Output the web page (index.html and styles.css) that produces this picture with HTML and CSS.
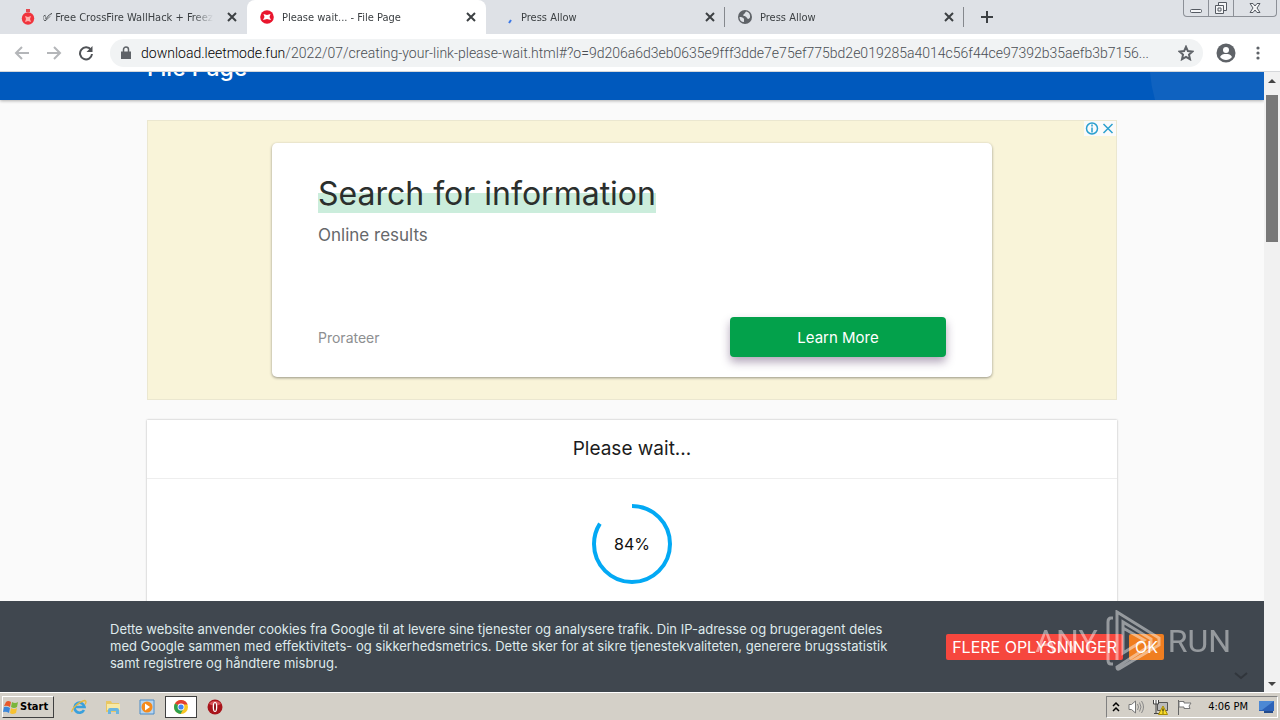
FILE: index.html
```html
<!DOCTYPE html>
<html lang="da">
<head>
    <meta charset="UTF-8">
    <meta name="viewport" content="width=device-width, initial-scale=1.0">
    <title>Please wait... - File Page</title>
    <link rel="stylesheet" href="styles.css">
</head>
<body>
    <!-- Tabs -->
    <div class="tabstrip">
        <div class="tab">
            <svg class="favicon" viewBox="0 0 16 16"><path d="M6 0h4v3H6z" fill="#e5484f"/><circle cx="8" cy="9.500" r="6.200" fill="#f0343d"/><path d="M5 7l3 1 3-1-1 3 1 3-3-1-3 1 1-3z" fill="#ffb0ac"/></svg>
            <a class="tab-title" href="#">✅︎ Free CrossFire WallHack + Freeze</a>
            <button class="tab-close" aria-label="Close tab"><svg viewBox="0 0 16 16"><path d="M4 4l8 8M12 4l-8 8"/></svg></button>
        </div>
        <div class="tab active">
            <svg class="favicon" viewBox="0 0 16 16"><circle cx="8" cy="8" r="6.800" fill="#e9152d"/><path d="M4.500 5l3.500 1 3.500-1-1 3 1.500 3-4-1-4 1 1.500-3z" fill="#fff"/></svg>
            <a class="tab-title" href="#">Please wait... - File Page</a>
            <button class="tab-close" aria-label="Close tab"><svg viewBox="0 0 16 16"><path d="M4 4l8 8M12 4l-8 8"/></svg></button>
        </div>
        <div class="tab line">
            <svg class="favicon" viewBox="0 0 16 16"><path d="M11 14l2-3" stroke="#3b78e7" stroke-width="2"/></svg>
            <a class="tab-title" href="#">Press Allow</a>
            <button class="tab-close" aria-label="Close tab"><svg viewBox="0 0 16 16"><path d="M4 4l8 8M12 4l-8 8"/></svg></button>
        </div>
        <div class="tab line">
            <svg class="favicon" viewBox="0 0 16 16"><circle cx="8" cy="8" r="7" fill="#5f6368"/><path d="M2.500 8c2 0 4 .5 4.500 2v3C4 13 2.500 11 2.500 8zM9 2.500c-1 1-1 2-2 2.500s-1 2 0 2 2 .5 3 2 2 1 3-.5c.5-3-1-5.500-4-6z" fill="#dee1e6"/></svg>
            <a class="tab-title" href="#">Press Allow</a>
            <button class="tab-close" aria-label="Close tab"><svg viewBox="0 0 16 16"><path d="M4 4l8 8M12 4l-8 8"/></svg></button>
        </div>
        <button class="new-tab" aria-label="New tab"><svg viewBox="0 0 16 16"><path d="M8 2v12M2 8h12"/></svg></button>
        <div class="window-buttons">
            <button aria-label="Minimize"><svg viewBox="0 0 14 14"><rect x="1.500" y="8.500" width="11" height="3" rx="1"/></svg></button>
            <button aria-label="Restore"><svg viewBox="0 0 14 14"><path d="M4.500 4V1.500h8v8H10M1.500 4.500h8v8h-8zM4 7h3v3H4z"/></svg></button>
            <button class="wide" aria-label="Close window"><svg viewBox="0 0 14 14"><path d="M2 2.500h3l2 2.500 2-2.500h3L9 7l3 4.500H9L7 9l-2 2.500H2L5 7z"/></svg></button>
        </div>
    </div>

    <!-- Address bar -->
    <div class="toolbar">
        <button class="nav-button off" aria-label="Back"><svg viewBox="0 0 16 16"><path d="M15 8H2M8 2L2 8l6 6"/></svg></button>
        <button class="nav-button off" aria-label="Forward"><svg viewBox="0 0 16 16"><path d="M1 8h13M8 2l6 6-6 6"/></svg></button>
        <button class="nav-button" aria-label="Reload"><svg viewBox="0 0 16 16"><path d="M13 5A6 6 0 1 0 14 9"/><path d="M14.500 1v6h-6z" class="solid"/></svg></button>
        <div class="omnibox">
            <svg class="lock" viewBox="0 0 12 14"><path d="M1 5.500h10V13H1z" fill="#5f6368"/><path d="M3.500 6V3.500a2.500 2.500 0 0 1 5 0V6" fill="none" stroke="#5f6368" stroke-width="1.500"/></svg>
            <div class="url"><span>download.leetmode.fun</span>/2022/07/creating-your-link-please-wait.html#?o=9d206a6d3eb0635e9fff3dde7e75ef775bd2e019285a4014c56f44ce97392b35aefb3b7156...</div>
            <button class="star" aria-label="Bookmark"><svg viewBox="0 0 16 16"><path d="M8 1.800l1.900 4.300 4.600.4-3.500 3.100 1 4.600-4-2.400-4 2.400 1-4.600L1.500 6.500l4.600-.4z"/></svg></button>
        </div>
        <button class="profile" aria-label="Profile"><svg viewBox="0 0 20 20"><circle cx="10" cy="10" r="9.500" fill="#5f6368"/><circle cx="10" cy="7" r="3" fill="#fff"/><path d="M4 14c1-2.500 3.500-3 6-3s5 .5 6 3c-3 4-9 4-12 0z" fill="#fff"/></svg></button>
        <button class="more" aria-label="Menu"><svg viewBox="0 0 4 16"><circle cx="2" cy="3" r="1.600"/><circle cx="2" cy="8" r="1.600"/><circle cx="2" cy="13" r="1.600"/></svg></button>
    </div>

    <div class="viewport">
        <div class="page">
            <header class="header">
                <svg class="header-shape" viewBox="0 0 115 28" preserveAspectRatio="none"><path d="M1 0h114v28H6Q2 14 1 0z" fill="#0f62c0"/></svg>
                <div class="container"><h1>File Page</h1></div>
            </header>

            <main class="container">
                <section class="ad">
                    <div class="ad-choices">
                        <svg viewBox="0 0 14 14"><circle cx="7" cy="7" r="5.500"/><path d="M7 6v5M7 3v2"/></svg>
                        <svg viewBox="0 0 14 14"><path d="M2.500 2.500l9 9M11.500 2.500l-9 9"/></svg>
                    </div>
                    <div class="ad-card">
                        <h2><span>Search for information</span></h2>
                        <p>Online results</p>
                        <div class="ad-footer">
                            <small>Prorateer</small>
                            <button class="learn">Learn More</button>
                        </div>
                    </div>
                </section>

                <section class="wait">
                    <h3>Please wait...</h3>
                    <div class="progress">
                        <svg viewBox="0 0 80 80"><circle cx="40" cy="40" r="38" pathLength="100" transform="rotate(-90 40 40)"/></svg>
                        <span>84%</span>
                    </div>
                </section>
            </main>

            <!-- Cookie notice -->
            <div class="cookies">
                <p>Dette website anvender cookies fra Google til at levere sine tjenester og analysere trafik. Din IP-adresse og brugeragent deles<br>med Google sammen med effektivitets- og sikkerhedsmetrics. Dette sker for at sikre tjenestekvaliteten, generere brugsstatistik<br>samt registrere og håndtere misbrug.</p>
                <div class="cookie-links">
                    <a class="info" href="#">FLERE OPLYSNINGER</a>
                    <a class="ok" href="#">OK</a>
                </div>
                <svg class="chevron" viewBox="0 0 14 8"><path d="M1 1l6 5 6-5"/></svg>
            </div>
        </div>
        <div class="scrollbar">
            <svg viewBox="0 0 16 16"><path d="M4 11l4-4 4 4z"/></svg>
            <div class="thumb"></div>
            <svg viewBox="0 0 16 16"><path d="M4 6l4 4 4-4z"/></svg>
        </div>
        <div class="watermark">
            <span>ANY</span>
            <svg viewBox="0 0 56 62"><path d="M8 8H6q-3 0-3 4v38q0 4 3 4h2M12 50V2l42 26v7L14 59q-2 1-2-2l34-22v-6L18 12v31l21-13L18 18"/></svg>
            <span>RUN</span>
        </div>
    </div>

    <!-- Windows taskbar -->
    <div class="taskbar">
        <button class="start">
            <svg viewBox="0 0 16 16"><path d="M3 3q2-2 5 0L7 8Q4 6 1 7z" fill="#e8592b"/><path d="M9 3q3 2 6 0l-1 5q-3 2-6 0z" fill="#7ab63c"/><path d="M1 8q3-1 6 1l-1 5q-3-2-6-1z" fill="#3d87d9"/><path d="M8 9q3 2 6 0l-1 5q-4 2-6 0z" fill="#f7c231"/></svg>
            Start
        </button>
        <div class="apps">
            <button aria-label="Internet Explorer"><svg viewBox="0 0 16 16"><path d="M13 11a5 5 0 1 1 .5-3H4" fill="none" stroke="#3aa0dc" stroke-width="2.600"/><path d="M1 13C0 10 9 2 14 1.500q2 1 0 4" fill="none" stroke="#e9b93a" stroke-width="1.300"/></svg></button>
            <button aria-label="Explorer"><svg viewBox="0 0 16 16"><path d="M1 2h5l1 2h7v9H1z" fill="#e9c763"/><path d="M2 5h13v6H2z" fill="#f8e9a5"/><path d="M3 15v-4q0-2 2-2h7q2 0 2 2v4h-3v-3H6v3z" fill="#6bb5df"/></svg></button>
            <button aria-label="Media Player"><svg viewBox="0 0 16 16"><path d="M1 1h14v14H1z" fill="#b6d4ef" stroke="#4b8cc8"/><circle cx="8" cy="8" r="5.500" fill="#f58a1c"/><path d="M6 4.500l5 3.500-5 3.500z" fill="#fff"/></svg></button>
            <button class="pressed" aria-label="Chrome"><svg viewBox="0 0 16 16"><circle cx="8" cy="8" r="7" fill="#f9c623"/><path d="M8 8L2 4.500A7 7 0 0 1 14.600 5.500H8z" fill="#e23f33"/><path d="M8 8L2 4.500A7 7 0 0 0 7.500 15L11 9z" fill="#2da04e"/><circle cx="8" cy="8" r="3.400" fill="#fff"/><circle cx="8" cy="8" r="2.600" fill="#4285f4"/></svg></button>
            <button aria-label="Opera"><svg viewBox="0 0 16 16"><circle cx="8" cy="8" r="7.500" fill="#a8141b"/><path d="M2 5a7 6 0 0 1 12 0q-6 3-12 0z" fill="#d9545a"/><ellipse cx="8" cy="8" rx="2.300" ry="5" fill="#fff"/><ellipse cx="8" cy="8" rx="1" ry="4" fill="#8c1016"/></svg></button>
        </div>
        <div class="tray">
            <svg class="small" viewBox="0 0 8 12"><path d="M1 5l3-3 3 3M1 10l3-3 3 3" fill="none" stroke="#000" stroke-width="1.500"/></svg>
            <svg viewBox="0 0 16 16"><path d="M1 5.500h2.500L7.500 2v12l-4-3.500H1z" fill="#fff" stroke="#777"/><path d="M9.500 5q2 3 0 6M11.500 3.500q3 4.500 0 9M13.500 2q4 6 0 12" fill="none" stroke="#888"/></svg>
            <svg viewBox="0 0 16 16"><path d="M5.500 3.500h10v8h-10z" fill="#bbb" stroke="#555"/><path d="M1 1h6v4H1z" fill="#fff"/><path d="M1.500 1v4h5V1M4 1v13M2 14.500h5" fill="none" stroke="#444"/><path d="M11 7l4.500 8.500h-9z" fill="#f9dc28" stroke="#a98b00"/><path d="M11 9.500v3M11 13.500v1" stroke="#000"/></svg>
            <svg viewBox="0 0 16 16"><path d="M2.500 1v15" stroke="#666"/><path d="M3 2.500h5v1.500h7l-2 3 1 2.500H8V8H3z" fill="#fff" stroke="#777"/></svg>
            <time>4:06 PM</time>
            <svg viewBox="0 0 16 16"><path d="M0 2h15v10H0z" fill="#2c62b8"/><path d="M0 2h15L3 11H0z" fill="#4c88d4"/><path d="M5 12h9v2H5z" fill="#234b8b"/></svg>
        </div>
    </div>
</body>
</html>
```
FILE: styles.css
```css
* {
    box-sizing: border-box;
}
body {
    margin: 0;
    height: 100vh;
    display: flex;
    flex-direction: column;
    overflow: hidden;
    font-family: Inter, "Liberation Sans", sans-serif;
}
h1, h2, h3, p {
    margin: 0;
    font-weight: 400;
}
button {
    padding: 0;
    border: none;
    background: none;
    cursor: pointer;
}
a {
    text-decoration: none;
}
svg {
    display: block;
    flex: none;
}

/* Tabs */
.tabstrip {
    display: flex;
    height: 34px;
    padding-left: 8px;
    background-color: #dee1e6;
    font-family: "DejaVu Sans Condensed", "Noto Sans", sans-serif;
}
.tab {
    display: flex;
    align-items: center;
    gap: 7px;
    width: 239px;
    padding: 0 7px 0 12px;
}
.tab.active {
    background-color: #fff;
    border-radius: 8px 8px 0 0;
}
.tab.line {
    background: linear-gradient(#85888d, #85888d) right center / 1px 20px no-repeat;
}
.favicon {
    width: 16px;
    height: 16px;
}
.tab-title {
    flex: 1;
    overflow: hidden;
    white-space: nowrap;
    font-size: 11px;
    color: #3c4043;
    mask-image: linear-gradient(to right, #000 86%, transparent 98%);
}
.tab-close svg, .new-tab svg {
    width: 16px;
    height: 16px;
    stroke: #3c4043;
    stroke-width: 2;
}
.new-tab {
    margin-left: 15px;
}
.window-buttons {
    display: flex;
    height: 17px;
    margin: 0 3px 0 auto;
    border: 1px solid #8c9097;
    border-top: none;
    border-radius: 0 0 4px 4px;
}
.window-buttons button {
    width: 25px;
    display: flex;
    justify-content: center;
    align-items: center;
    border-right: 1px solid #8c9097;
}
.window-buttons .wide {
    width: 42px;
    border-right: none;
}
.window-buttons svg {
    width: 14px;
    height: 14px;
    fill: #f4f5f7;
    stroke: #555a62;
}

/* Address bar */
.toolbar {
    display: flex;
    align-items: center;
    height: 38px;
    padding: 0 20px 0 14px;
    border-bottom: 1px solid #d5d7da;
    background-color: #fff;
}
.nav-button {
    margin-right: 16px;
}
.nav-button svg {
    width: 16px;
    height: 16px;
    fill: none;
    stroke: #505357;
    stroke-width: 2;
}
.nav-button.off svg {
    stroke: #b4b6b9;
}
.nav-button .solid {
    fill: #505357;
    stroke: none;
}
.omnibox {
    flex: 1;
    min-width: 0;
    display: flex;
    align-items: center;
    height: 28px;
    margin-right: 13px;
    padding: 0 9px 0 10px;
    border-radius: 14px;
    background-color: #f1f3f4;
}
.lock {
    width: 12px;
    height: 14px;
    margin-right: 9px;
}
.url {
    flex: 1;
    overflow: hidden;
    white-space: nowrap;
    font-family: Roboto, "Open Sans", sans-serif;
    font-size: 14px;
    font-weight: 300;
    color: #4a4e53;
}
.url span {
    color: #000;
}
.star svg {
    width: 16px;
    height: 16px;
    fill: none;
    stroke: #5f6368;
    stroke-width: 2;
}
.profile svg {
    width: 20px;
    height: 20px;
}
.more {
    margin-left: 20px;
}
.more svg {
    width: 4px;
    height: 16px;
    fill: #5f6368;
}

/* Page */
.viewport {
    flex: 1;
    min-height: 0;
    display: flex;
    position: relative;
}
.page {
    flex: 1;
    position: relative;
    overflow: hidden;
    background-color: #fafafa;
}
.container {
    width: 100%;
    max-width: 970px;
    margin: 0 auto;
}
/* the page is scrolled down, only the bottom of the header shows */
.header {
    position: relative;
    height: 80px;
    margin-top: -52px;
    padding-top: 32px;
    background-color: #0059bd;
    box-shadow: 0 1px 3px rgba(0, 0, 0, 0.3);
}
.header-shape {
    position: absolute;
    right: 0;
    bottom: 0;
    width: 115px;
    height: 28px;
}
.header h1 {
    font-size: 23px;
    line-height: 32px;
    font-weight: 500;
    color: #fff;
}
.ad {
    position: relative;
    margin-top: 20px;
    padding: 22px 0;
    border: 1px solid #ebe7d0;
    background-color: #f9f4d9;
}
.ad-choices {
    position: absolute;
    top: 0;
    right: 0;
    display: flex;
    gap: 2px;
    padding: 0 1px;
    background-color: #fafafa;
}
.ad-choices svg {
    width: 14px;
    height: 15px;
    fill: none;
    stroke: #2ba0cf;
    stroke-width: 1.500;
}
.ad-card {
    display: flex;
    flex-direction: column;
    max-width: 720px;
    height: 234px;
    margin: 0 auto;
    padding: 32px 46px 20px;
    border-radius: 5px;
    background-color: #fff;
    box-shadow: 0 1px 3px rgba(0, 0, 0, 0.4);
}
.ad-card h2 {
    font-size: 32px;
    line-height: 38px;
    color: #2b2f2d;
}
.ad-card h2 span {
    background: linear-gradient(transparent 50%, #cbeddc 50%);
}
.ad-card p {
    margin-top: 12px;
    font-size: 17px;
    line-height: 20px;
    color: #66686a;
}
.ad-footer {
    display: flex;
    justify-content: space-between;
    align-items: center;
    margin-top: auto;
}
.ad-footer small {
    font-size: 14px;
    color: #8d8f91;
}
.learn {
    width: 216px;
    height: 40px;
    border-radius: 4px;
    background-color: #03a14b;
    box-shadow: 0 5px 10px rgba(60, 30, 80, 0.4);
    font-family: inherit;
    font-size: 15px;
    color: #fff;
}
.wait {
    margin-top: 20px;
    height: 300px;
    background-color: #fff;
    box-shadow: 0 0 2px rgba(0, 0, 0, 0.3);
}
.wait h3 {
    padding: 14px 0;
    border-bottom: 1px solid #eee;
    font-size: 19px;
    line-height: 30px;
    text-align: center;
    color: #1c1c1c;
}
.progress {
    display: grid;
    place-items: center;
    margin-top: 25px;
    font-size: 16px;
    color: #111;
}
.progress > * {
    grid-area: 1 / 1;
}
.progress svg {
    width: 80px;
    height: 80px;
    fill: none;
    stroke: #03a9f4;
    stroke-width: 4;
    stroke-dasharray: 84 100;
}

/* Cookie notice */
.cookies {
    position: absolute;
    left: 0;
    right: 0;
    bottom: 0;
    display: flex;
    justify-content: space-between;
    align-items: center;
    height: 91px;
    padding: 0 100px 0 110px;
    background-color: #40474f;
}
.cookies p {
    font-size: 13px;
    line-height: 17px;
    white-space: nowrap;
    color: #dfeaec;
}
.cookie-links {
    display: flex;
    gap: 6px;
    font-size: 16px;
    line-height: 26px;
}
.cookie-links a {
    padding: 0 6px;
    border-radius: 2px;
    color: #fff;
}
.cookie-links .info {
    background-color: #f6473e;
}
.cookie-links .ok {
    background-color: #f07e20;
}
.chevron {
    position: absolute;
    right: 16px;
    bottom: 12px;
    width: 14px;
    height: 8px;
    fill: none;
    stroke: #31363c;
    stroke-width: 2;
}
.scrollbar {
    display: flex;
    flex-direction: column;
    width: 16px;
    background-color: #f1f1f1;
}
.scrollbar svg {
    width: 16px;
    height: 16px;
    fill: #444;
}
.thumb {
    height: 147px;
    margin: 7px 2px auto;
    background-color: #787878;
}
.watermark {
    position: absolute;
    right: 49px;
    bottom: 20px;
    display: flex;
    align-items: center;
    gap: 7px;
    opacity: 0.45;
    font-family: Roboto, "Liberation Sans", sans-serif;
    font-size: 32px;
    line-height: 62px;
    color: #fff;
}
.watermark svg {
    width: 56px;
    height: 62px;
    fill: none;
    stroke: #fff;
    stroke-width: 3;
}

/* Windows taskbar */
.taskbar {
    display: flex;
    align-items: center;
    height: 28px;
    padding: 0 2px;
    border-top: 1px solid #fff;
    background-color: #d4d0c8;
    font-family: "DejaVu Sans Condensed", "Noto Sans", sans-serif;
    font-size: 11px;
}
.start {
    display: flex;
    align-items: center;
    gap: 1px;
    width: 52px;
    height: 22px;
    border: 1px solid #fff;
    border-right-color: #404040;
    border-bottom-color: #404040;
    font-family: inherit;
    font-size: 11px;
    font-weight: bold;
}
.start svg, .apps svg, .tray svg {
    width: 16px;
    height: 16px;
}
.apps {
    display: flex;
    gap: 2px;
    margin-left: 9px;
}
.apps button {
    display: flex;
    justify-content: center;
    align-items: center;
    width: 32px;
    height: 22px;
}
.apps .pressed {
    border: 1px solid #404040;
    background-color: #fff;
}
.tray {
    display: flex;
    align-items: center;
    gap: 8px;
    height: 22px;
    margin-left: auto;
    padding: 0 2px 0 5px;
    border: 1px solid #808080;
    border-right-color: #fff;
    border-bottom-color: #fff;
}
.tray .small {
    width: 8px;
    height: 12px;
}
.tray time {
    margin: 0 3px 0 8px;
}
```
